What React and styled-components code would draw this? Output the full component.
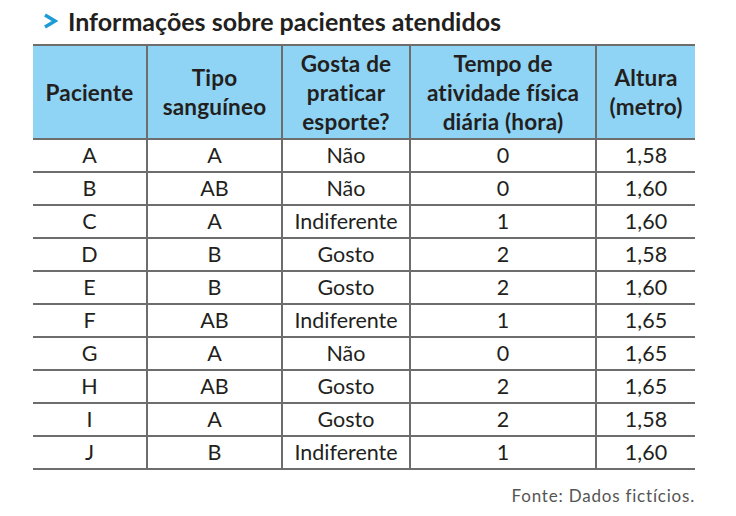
import React from 'react';
import styled, { createGlobalStyle } from 'styled-components';

const GlobalStyle = createGlobalStyle`
  html, body {
    margin: 0;
    padding: 0;
    background: #ffffff;
  }

  body {
    font-family: Lato, 'Noto Sans', sans-serif;
    color: #231f20;
  }
`;

const Page = styled.div`
  width: 736px;
  height: 516px;
  box-sizing: border-box;
  padding: 6px 41px 0 33px;
`;

const Title = styled.h1`
  display: flex;
  align-items: center;
  gap: 10px;
  margin: 0 0 8px 10px;
  height: 30px;
  font-size: 25px;
  font-weight: 700;
  line-height: 30px;
`;

const Chevron = styled.svg`
  width: 15px;
  height: 16px;
  flex: none;
`;

const Table = styled.table`
  width: 662px;
  border-collapse: collapse;
  table-layout: fixed;
  border-top: 2px solid #6d6d6d;
  border-bottom: 2px solid #6d6d6d;
`;

const HeadCell = styled.th`
  height: 92px;
  padding: 0 2px;
  background: #8fd4f5;
  font-size: 22.5px;
  font-weight: 700;
  line-height: 29px;
  letter-spacing: 0.2px;
  text-align: center;
  vertical-align: middle;
  border-left: ${({ $first }) => ($first ? 'none' : '2px solid #6d6d6d')};
  border-bottom: 2px solid #6d6d6d;
`;

const Cell = styled.td`
  height: 31px;
  padding: 0;
  font-size: 21.5px;
  line-height: 31px;
  text-align: center;
  border-left: ${({ $first }) => ($first ? 'none' : '2px solid #6d6d6d')};
  border-top: 2px solid #6d6d6d;
`;

const Source = styled.p`
  margin: 15px 0 0;
  text-align: right;
  font-size: 17px;
  color: #555555;
  letter-spacing: 0.8px;
`;

const columns = [
  { width: 114, label: ['Paciente'] },
  { width: 135, label: ['Tipo', 'sanguíneo'] },
  { width: 128, label: ['Gosta de', 'praticar', 'esporte?'] },
  { width: 186, label: ['Tempo de', 'atividade física', 'diária (hora)'] },
  { width: 99, label: ['Altura', '(metro)'] },
];

const patients = [
  ['A', 'A', 'Não', '0', '1,58'],
  ['B', 'AB', 'Não', '0', '1,60'],
  ['C', 'A', 'Indiferente', '1', '1,60'],
  ['D', 'B', 'Gosto', '2', '1,58'],
  ['E', 'B', 'Gosto', '2', '1,60'],
  ['F', 'AB', 'Indiferente', '1', '1,65'],
  ['G', 'A', 'Não', '0', '1,65'],
  ['H', 'AB', 'Gosto', '2', '1,65'],
  ['I', 'A', 'Gosto', '2', '1,58'],
  ['J', 'B', 'Indiferente', '1', '1,60'],
];

const App = () => (
  <>
    <GlobalStyle />
    <Page>
      <Title>
        <Chevron viewBox="0 0 15 16" aria-hidden="true">
          <path d="M2 2 L12 8 L2 14" fill="none" stroke="#1b9bd7" strokeWidth="3.4" strokeLinejoin="miter" />
        </Chevron>
        Informações sobre pacientes atendidos
      </Title>

      <Table>
        <colgroup>
          {columns.map(({ width }, i) => (
            <col key={i} style={{ width }} />
          ))}
        </colgroup>
        <thead>
          <tr>
            {columns.map(({ label }, i) => (
              <HeadCell key={i} $first={i === 0}>
                {label.map((line, idx) => (
                  <div key={idx}>{line}</div>
                ))}
              </HeadCell>
            ))}
          </tr>
        </thead>
        <tbody>
          {patients.map((row, i) => (
            <tr key={i}>
              {row.map((value, idx) => (
                <Cell key={idx} $first={idx === 0}>
                  {value}
                </Cell>
              ))}
            </tr>
          ))}
        </tbody>
      </Table>

      <Source>Fonte: Dados fictícios.</Source>
    </Page>
  </>
);

export default App;
